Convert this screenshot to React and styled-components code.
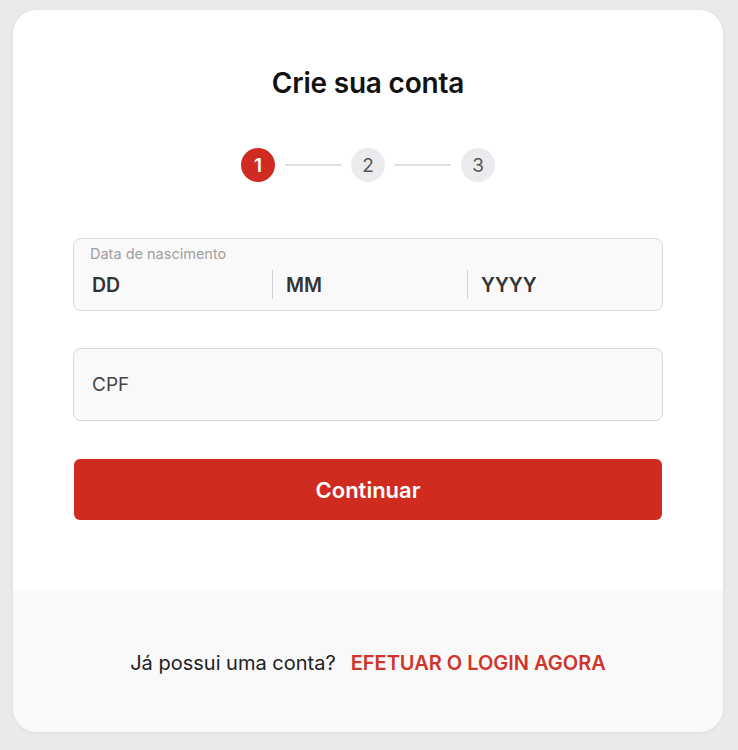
import React from "react";
import styled, { createGlobalStyle } from "styled-components";

const GlobalStyle = createGlobalStyle`
    * {
        box-sizing: border-box;
    }
    body {
        margin: 0;
        background: #e9eaeb;
        font-family: Inter, "Noto Sans", "Liberation Sans", sans-serif;
    }
`;

const steps = [1, 2, 3];
const dateParts = ["DD", "MM", "YYYY"];

function App() {
    return (
        <>
            <GlobalStyle />
            <Page>
                <Card>
                    <Main>
                        <Title>Crie sua conta</Title>
                        <Stepper>
                            {steps.map((step, index) => (
                                <React.Fragment key={step}>
                                    {index > 0 && <StepLine />}
                                    <StepCircle $active={step === 1}>{step}</StepCircle>
                                </React.Fragment>
                            ))}
                        </Stepper>
                        <Form>
                            <DateField>
                                <FieldLabel>Data de nascimento</FieldLabel>
                                <DateRow>
                                    {dateParts.map((part, index) => (
                                        <DatePart key={part} $divider={index > 0}>
                                            {part}
                                        </DatePart>
                                    ))}
                                </DateRow>
                            </DateField>
                            <TextField>CPF</TextField>
                            <SubmitButton type="button">Continuar</SubmitButton>
                        </Form>
                    </Main>
                    <Footer>
                        <FooterText>Já possui uma conta?</FooterText>
                        <LoginLink href="#">EFETUAR O LOGIN AGORA</LoginLink>
                    </Footer>
                </Card>
            </Page>
        </>
    );
}

export default App;

const Page = styled.div`
    padding: 10px 15px 18px 13px;
`;

const Card = styled.div`
    background: #ffffff;
    border-radius: 24px;
    overflow: hidden;
    box-shadow: 0 1px 4px rgba(0, 0, 0, 0.06);
`;

const Main = styled.div`
    display: flex;
    flex-direction: column;
    align-items: center;
    padding: 56px 60px 70px;
`;

const Title = styled.h1`
    margin: 0;
    font-size: 28px;
    line-height: 34px;
    font-weight: 600;
    letter-spacing: -0.2px;
    color: #111;
`;

const Stepper = styled.div`
    display: flex;
    align-items: center;
    margin-top: 48px;
`;

const StepCircle = styled.div`
    width: 34px;
    height: 34px;
    border-radius: 50%;
    display: flex;
    align-items: center;
    justify-content: center;
    font-size: 19px;
    font-weight: ${(p) => (p.$active ? 600 : 400)};
    color: ${(p) => (p.$active ? "#fff" : "#555")};
    background: ${(p) => (p.$active ? "#d02b20" : "#ebebed")};
`;

const StepLine = styled.div`
    width: 56px;
    height: 2px;
    margin: 0 10px;
    background: #e0e0e0;
`;

const Form = styled.div`
    width: 100%;
    display: flex;
    flex-direction: column;
    margin-top: 56px;
`;

const DateField = styled.div`
    height: 73px;
    background: #f9f9f9;
    border: 1px solid #d9d9d9;
    border-radius: 8px;
    padding: 6px 0 0;
`;

const FieldLabel = styled.div`
    padding-left: 16px;
    font-size: 14.5px;
    line-height: 18px;
    color: #a0a0a0;
`;

const DateRow = styled.div`
    display: grid;
    grid-template-columns: repeat(3, 1fr);
    margin-top: 7px;
    padding-left: 3px;
`;

const DatePart = styled.div`
    height: 29px;
    display: flex;
    align-items: center;
    padding-left: ${(p) => (p.$divider ? "13px" : "15px")};
    border-left: ${(p) => (p.$divider ? "1px solid #cfcfcf" : "none")};
    font-size: 19.5px;
    font-weight: 600;
    color: #333;
`;

const TextField = styled.div`
    height: 73px;
    margin-top: 37px;
    display: flex;
    align-items: center;
    padding-left: 18px;
    background: #f9f9f9;
    border: 1px solid #d9d9d9;
    border-radius: 8px;
    font-size: 19px;
    color: #444;
`;

const SubmitButton = styled.button`
    height: 61px;
    margin: 38px 1px 0;
    border: none;
    border-radius: 6px;
    background: #cf2b1f;
    color: #fff;
    font-family: inherit;
    font-size: 22px;
    font-weight: 600;
    cursor: pointer;
`;

const Footer = styled.div`
    height: 142px;
    background: #f9f9f9;
    display: flex;
    align-items: center;
    justify-content: center;
    gap: 15px;
    padding-top: 4px;
`;

const FooterText = styled.span`
    font-size: 20px;
    color: #222;
`;

const LoginLink = styled.a`
    font-size: 20px;
    font-weight: 600;
    color: #d0352c;
    text-decoration: none;
`;
